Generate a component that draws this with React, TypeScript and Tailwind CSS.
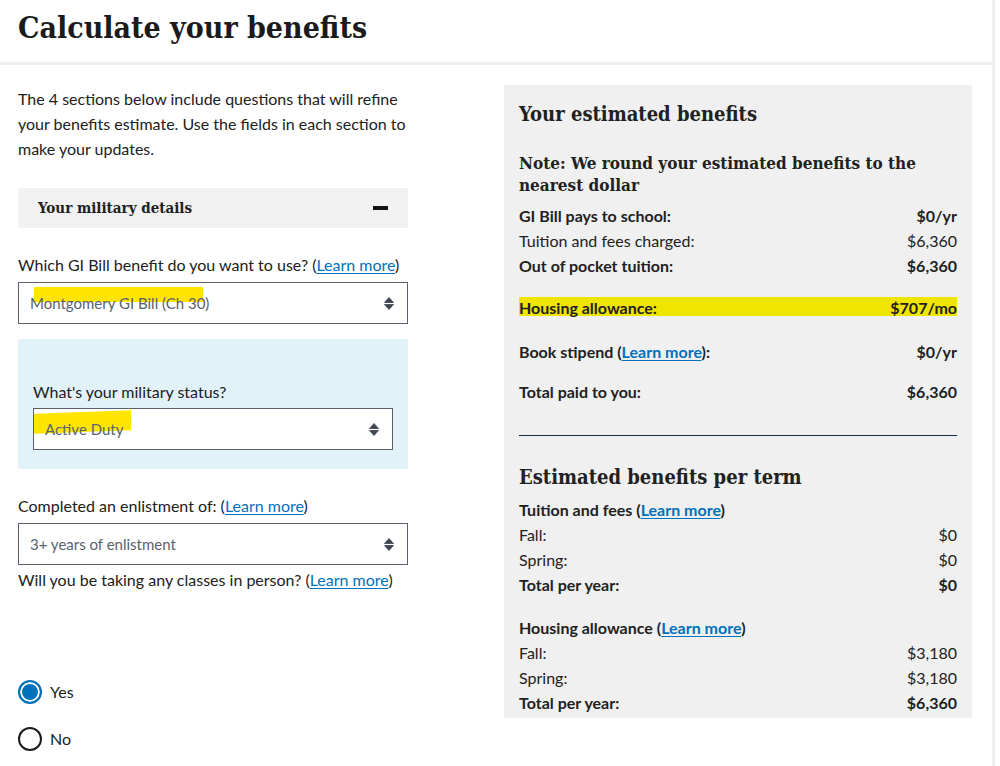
import React from "react";

const serif = "font-['DejaVu_Serif',serif] font-stretch-condensed font-bold";

const SelectArrows = () => (
  <svg width="10" height="15" viewBox="0 0 10 15" className="shrink-0">
    <path d="M0.5 6.5 L5 1.5 L9.5 6.5 Z" fill="#3d4551" strokeLinejoin="round" stroke="#3d4551" strokeWidth="0.8" />
    <path d="M0.5 8.5 L9.5 8.5 L5 13.5 Z" fill="#3d4551" strokeLinejoin="round" stroke="#3d4551" strokeWidth="0.8" />
  </svg>
);

const LearnMore = ({ bold = false }: { bold?: boolean }) => (
  <>
    (<a className={`text-[#0071bb] underline underline-offset-2 ${bold ? "font-bold" : ""}`}>Learn more</a>)
  </>
);

const Select = ({ value, mark }: { value: string; mark?: React.ReactNode }) => (
  <div className="relative flex h-[42px] items-center justify-between border border-[#5b616b] bg-white pl-[11px] pr-[13px]">
    {mark}
    <span className="relative text-[15px] text-[#5b616b]">{value}</span>
    <SelectArrows />
  </div>
);

const Row = ({ label, value, bold = false }: { label: React.ReactNode; value: string; bold?: boolean }) => (
  <div className={`relative flex h-[25px] items-center justify-between ${bold ? "font-bold" : ""}`}>
    <span>{label}</span>
    <span>{value}</span>
  </div>
);

const Radio = ({ checked, label }: { checked?: boolean; label: string }) => (
  <label className="flex items-center gap-2">
    {checked ? (
      <span className="h-6 w-6 rounded-full border-2 border-[#0071bb] bg-[#0071bb] shadow-[inset_0_0_0_2px_white]" />
    ) : (
      <span className="h-6 w-6 rounded-full border-2 border-[#1b1b1b] bg-white" />
    )}
    <span className="text-[16px]">{label}</span>
  </label>
);

export default function App() {
  return (
    <div className="flex h-[766px] w-[1000px] overflow-hidden bg-white font-['Lato',sans-serif] text-[#212121]">
      <div className="w-[992px] shrink-0">
        <header className="h-[65px] border-b-[3px] border-[#efefef] pl-[18px] pt-[6px]">
          <h1 className={`${serif} text-[30px] leading-[44px] text-[#1b1b1b]`}>Calculate your benefits</h1>
        </header>

        <div className="flex">
          {/* form column */}
          <div className="ml-[18px] w-[390px] shrink-0 pt-[21px]">
            <p className="text-[16px] leading-[25px]">
              The 4 sections below include questions that will refine your benefits estimate. Use the fields in each
              section to make your updates.
            </p>

            <div className="mt-[27px] flex h-[40px] items-center justify-between bg-[#f1f1f1] pl-5 pr-5">
              <span className={`${serif} text-[15px]`}>Your military details</span>
              <span className="h-[4px] w-[15px] bg-[#111]" />
            </div>

            <div className="mt-[24px] text-[16px] leading-[25px]">
              Which GI Bill benefit do you want to use? <LearnMore />
            </div>
            <div className="mt-[5px]">
              <Select
                value="Montgomery GI Bill (Ch 30)"
                mark={<span className="absolute left-[15px] top-[4px] h-[15px] w-[169px] bg-[#ffe500]" />}
              />
            </div>

            <div className="mt-[15px] h-[130px] bg-[#e1f3f8] px-[15px] pt-[40px]">
              <div className="text-[16px] leading-[25px]">What's your military status?</div>
              <div className="mt-[4px]">
                <Select
                  value="Active Duty"
                  mark={<span className="absolute left-0 top-[3px] h-[20px] w-[97px] -skew-y-2 bg-[#ffe500]" />}
                />
              </div>
            </div>

            <div className="mt-[24px] text-[16px] leading-[25px]">
              Completed an enlistment of: <LearnMore />
            </div>
            <div className="mt-[5px]">
              <Select value="3+ years of enlistment" />
            </div>
            <div className="mt-[2px] text-[16px] leading-[25px]">
              Will you be taking any classes in person? <LearnMore />
            </div>

            <div className="mt-[88px] flex flex-col gap-[23px]">
              <Radio checked label="Yes" />
              <Radio label="No" />
            </div>
          </div>

          {/* estimate panel */}
          <aside className="ml-[96px] mt-[20px] h-[633px] w-[468px] shrink-0 bg-[#f0f0f0] px-[15px] pt-[15px] text-[16px]">
            <h2 className={`${serif} text-[20px] leading-[28px]`}>Your estimated benefits</h2>
            <h3 className={`${serif} mt-[24px] text-[17px] leading-[22px]`}>
              Note: We round your estimated benefits to the nearest dollar
            </h3>
            <div className="mt-[7px]">
              <Row bold label="GI Bill pays to school:" value="$0/yr" />
              <Row label="Tuition and fees charged:" value="$6,360" />
              <Row bold label="Out of pocket tuition:" value="$6,360" />
            </div>
            <div className="relative mt-[17px]">
              <span className="absolute inset-x-0 top-[2px] h-[19px] bg-[#f0e500]" />
              <Row bold label="Housing allowance:" value="$707/mo" />
            </div>
            <div className="mt-[19px]">
              <Row bold label={<>Book stipend <LearnMore bold />:</>} value="$0/yr" />
            </div>
            <div className="mt-[15px]">
              <Row bold label="Total paid to you:" value="$6,360" />
            </div>
            <hr className="mt-[31px] border-0 border-t border-[#112e51]" />
            <h2 className={`${serif} mt-[27px] text-[20px] leading-[28px]`}>Estimated benefits per term</h2>
            <div className="mt-[6px]">
              <Row bold label={<>Tuition and fees <LearnMore bold /></>} value="" />
              <Row label="Fall:" value="$0" />
              <Row label="Spring:" value="$0" />
              <Row bold label="Total per year:" value="$0" />
            </div>
            <div className="mt-[18px]">
              <Row bold label={<>Housing allowance <LearnMore bold /></>} value="" />
              <Row label="Fall:" value="$3,180" />
              <Row label="Spring:" value="$3,180" />
              <Row bold label="Total per year:" value="$6,360" />
            </div>
          </aside>
        </div>
      </div>
      <div className="w-[3px] shrink-0 bg-[#efefef]" />
    </div>
  );
}
